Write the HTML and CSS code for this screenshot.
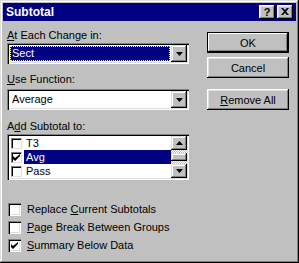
FILE: index.html
```html
<!DOCTYPE html>
<html lang="en">
<head>
    <meta charset="UTF-8">
    <title>Subtotal</title>
    <link rel="stylesheet" href="styles.css">
</head>
<body>
    <div class="dialog">
        <div class="titlebar">
            <span class="title">Subtotal</span>
            <span class="tbtn help">?</span>
            <span class="tbtn close">
                <svg width="8" height="7" viewBox="0 0 8 7"><path d="M0 0h2l2 2 2-2h2L5 3.5 8 7H6L4 5 2 7H0l3-3.5z"/></svg>
            </span>
        </div>
        <div class="content">
            <div class="left">
                <div class="label l1"><u>A</u>t Each Change in:</div>
                <div class="combo">
                    <div class="field"><span class="sel">Sect</span></div>
                    <div class="abtn"><svg width="7" height="4" viewBox="0 0 7 4"><path d="M0 0h7L3.5 4z"/></svg></div>
                </div>
                <div class="label l2"><u>U</u>se Function:</div>
                <div class="combo">
                    <div class="field"><span class="val">Average</span></div>
                    <div class="abtn"><svg width="7" height="4" viewBox="0 0 7 4"><path d="M0 0h7L3.5 4z"/></svg></div>
                </div>
                <div class="label l3">A<u>d</u>d Subtotal to:</div>
                <div class="listbox">
                    <div class="items">
                        <div class="item"><span class="lcheck"></span><span class="itext">T3</span></div>
                        <div class="item selected"><span class="lcheck"><svg width="7" height="7" viewBox="0 0 7 7"><path d="M0 2v3l2 2 5-5V0L2 4z"/></svg></span><span class="itext">Avg</span></div>
                        <div class="item"><span class="lcheck"></span><span class="itext">Pass</span></div>
                    </div>
                    <div class="scrollbar">
                        <div class="sbtn"><svg width="7" height="4" viewBox="0 0 7 4"><path d="M0 4h7L3.5 0z"/></svg></div>
                        <div class="track"><div class="thumb"></div></div>
                        <div class="sbtn"><svg width="7" height="4" viewBox="0 0 7 4"><path d="M0 0h7L3.5 4z"/></svg></div>
                    </div>
                </div>
                <div class="checks">
                    <div class="check"><span class="box"></span><span>Replace <u>C</u>urrent Subtotals</span></div>
                    <div class="check"><span class="box"></span><span><u>P</u>age Break Between Groups</span></div>
                    <div class="check"><span class="box"><svg width="7" height="7" viewBox="0 0 7 7"><path d="M0 2v3l2 2 5-5V0L2 4z"/></svg></span><span><u>S</u>ummary Below Data</span></div>
                </div>
            </div>
            <div class="right">
                <div class="button default">OK</div>
                <div class="button">Cancel</div>
                <div class="button remove"><span><u>R</u>emove All</span></div>
            </div>
        </div>
    </div>
</body>
</html>
```

FILE: styles.css
```css
body { margin: 0; background: #c0c0c0; }
.dialog { width: 299px; height: 263px; box-sizing: border-box; padding: 3px; background: #c0c0c0; box-shadow: inset -1px -1px #000, inset 1px 1px #dfdfdf, inset -2px -2px #808080, inset 2px 2px #fff; font-family: "Liberation Sans", Arial, sans-serif; font-size: 11px; color: #000; }
u { text-decoration: underline; text-underline-offset: 1px; }

.titlebar { height: 18px; background: #000080; display: flex; align-items: center; padding: 0 3px 0 3px; }
.title { flex: 1; color: #fff; font-weight: bold; font-size: 12px; }
.tbtn { width: 16px; height: 14px; box-sizing: border-box; background: #c0c0c0; display: flex; align-items: center; justify-content: center; box-shadow: inset -1px -1px #000, inset 1px 1px #fff, inset -2px -2px #808080, inset 2px 2px #dfdfdf; }
.help { font-weight: bold; font-size: 11px; line-height: 14px; margin-right: 2px; padding-bottom: 1px; }
.close svg { margin-bottom: 1px; }

.content { display: flex; padding: 8px 0 0 4px; }
.left { width: 182px; }
.right { width: 82px; margin: 3px 0 0 18px; }

.label { height: 13px; line-height: 13px; }
.l1 { margin-bottom: 1px; }
.l2 { margin: 9px 0 3px; }
.l3 { margin: 10px 0 1px; }

.combo { height: 21px; box-sizing: border-box; display: flex; background: #fff; padding: 2px; box-shadow: inset 1px 1px #808080, inset 2px 2px #000, inset -1px -1px #fff, inset -2px -2px #dfdfdf; }
.field { flex: 1; padding: 1px; }
.sel { display: block; height: 15px; line-height: 15px; padding-left: 2px; background: #000080; color: #fff; outline: 1px dotted #ffff80; outline-offset: -1px; }
.val { display: block; height: 15px; line-height: 15px; padding-left: 2px; }
.abtn { width: 16px; background: #c0c0c0; display: flex; align-items: center; justify-content: center; box-shadow: inset -1px -1px #000, inset 1px 1px #dfdfdf, inset -2px -2px #808080, inset 2px 2px #fff; }

.listbox { height: 46px; box-sizing: border-box; display: flex; background: #fff; padding: 2px; box-shadow: inset 1px 1px #808080, inset 2px 2px #000, inset -1px -1px #fff, inset -2px -2px #dfdfdf; }
.items { flex: 1; }
.item { height: 14px; display: flex; align-items: center; }
.lcheck { width: 11px; height: 11px; box-sizing: border-box; margin: 0 2px 0 2px; border: 1px solid; border-color: #808080 #dfdfdf #dfdfdf #808080; box-shadow: inset 1px 1px #000; display: flex; align-items: center; justify-content: center; background: #fff; }
.itext { flex: 1; height: 14px; line-height: 14px; padding-left: 2px; }
.selected .itext { background: #000080; color: #fff; }

.scrollbar { width: 16px; display: flex; flex-direction: column; }
.sbtn { height: 14px; background: #c0c0c0; display: flex; align-items: center; justify-content: center; box-shadow: inset -1px -1px #000, inset 1px 1px #dfdfdf, inset -2px -2px #808080, inset 2px 2px #fff; }
.track { flex: 1; padding-top: 3px; background: repeating-conic-gradient(#fff 0 25%, #c0c0c0 0 50%) 0 0 / 2px 2px; }
.thumb { height: 8px; background: #c0c0c0; box-shadow: inset -1px -1px #000, inset 1px 1px #dfdfdf, inset -2px -2px #808080, inset 2px 2px #fff; }

.checks { margin-top: 20px; }
.check { height: 18px; display: flex; align-items: center; }
.box { width: 13px; height: 13px; box-sizing: border-box; margin: 0 6px 0 1px; background: #fff; display: flex; align-items: center; justify-content: center; box-shadow: inset 1px 1px #808080, inset 2px 2px #000, inset -1px -1px #fff, inset -2px -2px #dfdfdf; }

.button { height: 21px; box-sizing: border-box; display: flex; align-items: center; justify-content: center; margin-bottom: 4px; box-shadow: inset -1px -1px #000, inset 1px 1px #fff, inset -2px -2px #808080, inset 2px 2px #dfdfdf; }
.default { border: 1px solid #000; box-shadow: inset -1px -1px #000, inset 1px 1px #fff, inset -2px -2px #808080; }
.remove { margin-top: 11px; }
```
